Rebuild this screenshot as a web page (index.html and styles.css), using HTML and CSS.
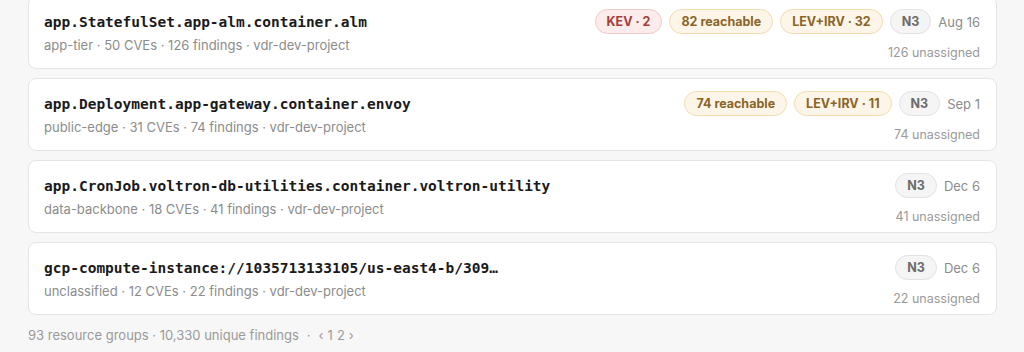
FILE: index.html
```html
<!DOCTYPE html>
<html lang="en">
<head>
<meta charset="utf-8">
<title>Resource groups</title>
<link rel="stylesheet" href="styles.css">
</head>
<body>
<main class="page">
  <ul class="list">
    <li class="card">
      <div class="info">
        <div class="title">app.StatefulSet.app-alm.container.alm</div>
        <div class="meta">app-tier · 50 CVEs · 126 findings · vdr-dev-project</div>
      </div>
      <div class="side">
        <div class="badges">
          <span class="badge kev">KEV · 2</span>
          <span class="badge warn">82 reachable</span>
          <span class="badge warn">LEV+IRV · 32</span>
          <span class="badge neutral">N3</span>
          <span class="date">Aug 16</span>
        </div>
        <div class="unassigned">126 unassigned</div>
      </div>
    </li>
    <li class="card">
      <div class="info">
        <div class="title">app.Deployment.app-gateway.container.envoy</div>
        <div class="meta">public-edge · 31 CVEs · 74 findings · vdr-dev-project</div>
      </div>
      <div class="side">
        <div class="badges">
          <span class="badge warn">74 reachable</span>
          <span class="badge warn">LEV+IRV · 11</span>
          <span class="badge neutral">N3</span>
          <span class="date">Sep 1</span>
        </div>
        <div class="unassigned">74 unassigned</div>
      </div>
    </li>
    <li class="card">
      <div class="info">
        <div class="title">app.CronJob.voltron-db-utilities.container.voltron-utility</div>
        <div class="meta">data-backbone · 18 CVEs · 41 findings · vdr-dev-project</div>
      </div>
      <div class="side">
        <div class="badges">
          <span class="badge neutral">N3</span>
          <span class="date">Dec 6</span>
        </div>
        <div class="unassigned">41 unassigned</div>
      </div>
    </li>
    <li class="card">
      <div class="info">
        <div class="title">gcp-compute-instance://1035713133105/us-east4-b/309…</div>
        <div class="meta">unclassified · 12 CVEs · 22 findings · vdr-dev-project</div>
      </div>
      <div class="side">
        <div class="badges">
          <span class="badge neutral">N3</span>
          <span class="date">Dec 6</span>
        </div>
        <div class="unassigned">22 unassigned</div>
      </div>
    </li>
  </ul>
  <footer class="footer">
    <span>93 resource groups · 10,330 unique findings</span>
    <span class="sep">·</span>
    <nav class="pager"><span>‹</span><span>1</span><span>2</span><span>›</span></nav>
  </footer>
</main>
</body>
</html>
```
FILE: styles.css
```css
* { box-sizing: border-box; }
html, body { margin: 0; padding: 0; }
body {
  background: #f7f7f7;
  font-family: Inter, "Liberation Sans", sans-serif;
  color: #1a1a1a;
}
.page {
  padding: 0 27px 0 28px;
}
.list {
  list-style: none;
  margin: -4px 0 0 0;
  padding: 0;
  display: flex;
  flex-direction: column;
  gap: 9px;
}
.card {
  background: #ffffff;
  border: 1px solid #e4e4e4;
  border-radius: 8px;
  height: 73px;
  padding: 12px 16px 0 15px;
  display: flex;
  justify-content: space-between;
  align-items: flex-start;
}
.info {
  display: flex;
  flex-direction: column;
}
.title {
  font-family: "DejaVu Sans Mono", "Liberation Mono", monospace;
  font-weight: bold;
  font-size: 14.5px;
  line-height: 26px;
  color: #1a1a1a;
  white-space: nowrap;
}
.meta {
  font-size: 13px;
  line-height: 18px;
  margin-top: 1px;
  color: #8c8c8c;
}
.side {
  display: flex;
  flex-direction: column;
  align-items: flex-end;
}
.badges {
  display: flex;
  align-items: center;
  gap: 7px;
  height: 25px;
}
.badge {
  display: inline-flex;
  align-items: center;
  height: 25px;
  padding: 0 11px;
  border-radius: 13px;
  border: 1px solid;
  font-size: 12.5px;
  font-weight: 700;
}
.kev {
  background: #fcecec;
  border-color: #f1c9c9;
  color: #a4403d;
}
.warn {
  background: #fdf6e8;
  border-color: #f1dcae;
  color: #8a6528;
}
.neutral {
  background: #f5f5f5;
  border-color: #e2e2e2;
  color: #6b6b6b;
}
.date {
  font-size: 13px;
  color: #8c8c8c;
}
.unassigned {
  font-size: 12.5px;
  line-height: 18px;
  margin-top: 10px;
  color: #9a9a9a;
}
.footer {
  display: flex;
  align-items: center;
  gap: 8px;
  margin-top: 11px;
  font-size: 13px;
  line-height: 18px;
  color: #9a9a9a;
}
.pager {
  display: flex;
  gap: 4px;
}
```
